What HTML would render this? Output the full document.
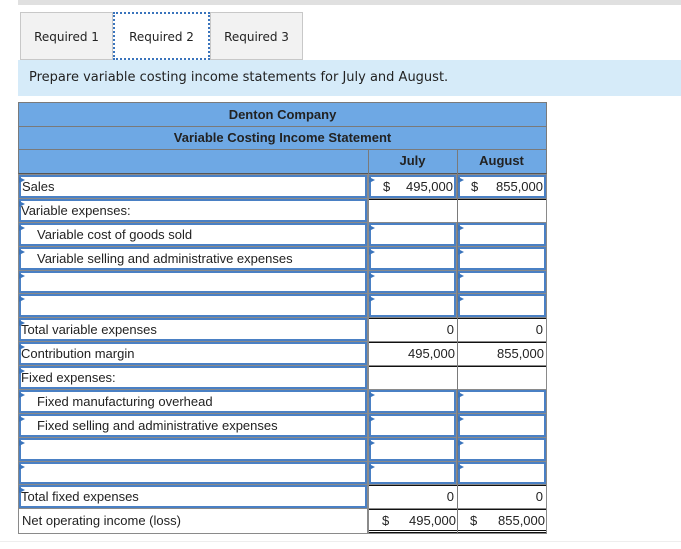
<!DOCTYPE html>
<html><head><meta charset="utf-8"><style>
*{margin:0;padding:0;box-sizing:border-box}
body{width:681px;height:549px;background:#fff;position:relative;overflow:hidden;font-family:"Liberation Sans",Arial,sans-serif;font-size:13px;color:#222}
.a{position:absolute}
.tab{position:absolute;top:12px;height:48px;background:#f2f2f2;border:1px solid #c8c8c8;font-family:"DejaVu Sans",Verdana,sans-serif;font-size:12px;color:#222;text-align:center;line-height:48px}
.hd{position:absolute;left:18px;width:529px;background:#6ea8e4;border:1px solid #7a7a7a;border-bottom:none;font-weight:bold;font-size:13px;text-align:center;color:#222}
.in{position:absolute;border:2px solid #4a80c4;background:#fff}
.in::before{content:"";position:absolute;left:-2px;top:-2px;border-left:6px solid #3a74bc;border-top:3px solid transparent;border-bottom:3px solid transparent;transform:translateY(2px)}
.pl{position:absolute;background:#fff}
.t{position:absolute;white-space:nowrap;line-height:22px}
.vl{position:absolute;width:1px;background:#7a7a7a}
</style></head><body>
<div class="a" style="left:18px;top:0;width:663px;height:5px;background:#e0e0e0"></div>
<div class="tab" style="left:20px;width:93px">Required 1</div>
<div class="tab" style="left:113px;width:97px;background:#fff;border:2px dotted #3a74bc;line-height:46px">Required 2</div>
<div class="tab" style="left:210px;width:93px">Required 3</div>
<div class="a" style="left:18px;top:60px;width:663px;height:36px;background:#d6ebf9;font-family:'DejaVu Sans',Verdana,sans-serif;font-size:13px;line-height:36px;padding-left:11px;color:#222">Prepare variable costing income statements for July and August.</div>

<div class="hd" style="top:102px;height:24px;line-height:24px">Denton Company</div>
<div class="hd" style="top:126px;height:23px;line-height:21px">Variable Costing Income Statement</div>
<div class="hd" style="top:149px;height:25px;line-height:25px;border-bottom:1px solid #555"></div>
<div class="t" style="left:368px;width:89px;top:150px;text-align:center;font-weight:bold;font-size:13px">July</div>
<div class="t" style="left:457px;width:89px;top:150px;text-align:center;font-weight:bold;font-size:13px">August</div>
<div class="vl" style="left:368px;top:149px;height:25px"></div>
<div class="vl" style="left:457px;top:149px;height:25px"></div>

<div class="a" style="left:18px;top:174px;width:529px;height:360px;background:#8a8a8a"></div>

<div class="in" style="left:19px;top:175px;width:348px;height:23px"><span class="t" style="left:1px;top:-1px">Sales</span></div>
<div class="in" style="left:369px;top:175px;width:87px;height:23px"><span class="t" style="left:12px;top:-1px">$</span><span class="t" style="right:1px;top:-1px">495,000</span></div>
<div class="in" style="left:458px;top:175px;width:88px;height:23px"><span class="t" style="left:11px;top:-1px">$</span><span class="t" style="right:1px;top:-1px">855,000</span></div>
<div class="in" style="left:19px;top:199px;width:348px;height:23px"><span class="t" style="left:0;top:-1px">Variable expenses:</span></div>
<div class="pl" style="left:369px;top:199px;width:88px;height:23px;border-top:1px solid #111"></div>
<div class="pl" style="left:458px;top:199px;width:88px;height:23px;border-top:1px solid #111"></div>
<div class="in" style="left:19px;top:223px;width:348px;height:23px"><span class="t" style="left:16px;top:-1px">Variable cost of goods sold</span></div>
<div class="in" style="left:369px;top:223px;width:87px;height:23px"></div>
<div class="in" style="left:458px;top:223px;width:88px;height:23px"></div>
<div class="in" style="left:19px;top:247px;width:348px;height:23px"><span class="t" style="left:16px;top:-1px">Variable selling and administrative expenses</span></div>
<div class="in" style="left:369px;top:247px;width:87px;height:23px"></div>
<div class="in" style="left:458px;top:247px;width:88px;height:23px"></div>
<div class="in" style="left:19px;top:271px;width:348px;height:22px"></div>
<div class="in" style="left:369px;top:271px;width:87px;height:22px"></div>
<div class="in" style="left:458px;top:271px;width:88px;height:22px"></div>
<div class="in" style="left:19px;top:294px;width:348px;height:23px"></div>
<div class="in" style="left:369px;top:294px;width:87px;height:23px"></div>
<div class="in" style="left:458px;top:294px;width:88px;height:23px"></div>
<div class="in" style="left:19px;top:318px;width:348px;height:23px"><span class="t" style="left:0;top:-1px">Total variable expenses</span></div>
<div class="pl" style="left:369px;top:318px;width:88px;height:23px;border-top:1px solid #111"><span class="t" style="right:3px;top:0">0</span></div>
<div class="pl" style="left:458px;top:318px;width:88px;height:23px;border-top:1px solid #111"><span class="t" style="right:3px;top:0">0</span></div>
<div class="in" style="left:19px;top:342px;width:348px;height:23px"><span class="t" style="left:0;top:-1px">Contribution margin</span></div>
<div class="pl" style="left:369px;top:342px;width:88px;height:23px;border-top:1px solid #111"><span class="t" style="right:2px;top:0">495,000</span></div>
<div class="pl" style="left:458px;top:342px;width:88px;height:23px;border-top:1px solid #111"><span class="t" style="right:2px;top:0">855,000</span></div>
<div class="in" style="left:19px;top:366px;width:348px;height:23px"><span class="t" style="left:0;top:-1px">Fixed expenses:</span></div>
<div class="pl" style="left:369px;top:366px;width:88px;height:23px;border-top:1px solid #111"></div>
<div class="pl" style="left:458px;top:366px;width:88px;height:23px;border-top:1px solid #111"></div>
<div class="in" style="left:19px;top:390px;width:348px;height:23px"><span class="t" style="left:16px;top:-1px">Fixed manufacturing overhead</span></div>
<div class="in" style="left:369px;top:390px;width:87px;height:23px"></div>
<div class="in" style="left:458px;top:390px;width:88px;height:23px"></div>
<div class="in" style="left:19px;top:414px;width:348px;height:23px"><span class="t" style="left:16px;top:-1px">Fixed selling and administrative expenses</span></div>
<div class="in" style="left:369px;top:414px;width:87px;height:23px"></div>
<div class="in" style="left:458px;top:414px;width:88px;height:23px"></div>
<div class="in" style="left:19px;top:438px;width:348px;height:23px"></div>
<div class="in" style="left:369px;top:438px;width:87px;height:23px"></div>
<div class="in" style="left:458px;top:438px;width:88px;height:23px"></div>
<div class="in" style="left:19px;top:462px;width:348px;height:22px"></div>
<div class="in" style="left:369px;top:462px;width:87px;height:22px"></div>
<div class="in" style="left:458px;top:462px;width:88px;height:22px"></div>
<div class="in" style="left:19px;top:485px;width:348px;height:23px"><span class="t" style="left:0;top:-1px">Total fixed expenses</span></div>
<div class="pl" style="left:369px;top:485px;width:88px;height:23px;border-top:1px solid #111"><span class="t" style="right:3px;top:0">0</span></div>
<div class="pl" style="left:458px;top:485px;width:88px;height:23px;border-top:1px solid #111"><span class="t" style="right:3px;top:0">0</span></div>
<div class="pl" style="left:19px;top:509px;width:348px;height:24px"><span class="t" style="left:3px;top:1px">Net operating income (loss)</span></div>
<div class="pl" style="left:369px;top:509px;width:88px;height:24px;border-top:1px solid #111;border-bottom:3px double #111"><span class="t" style="left:13px;top:0">$</span><span class="t" style="right:1px;top:0">495,000</span></div>
<div class="pl" style="left:458px;top:509px;width:88px;height:24px;border-top:1px solid #111;border-bottom:3px double #111"><span class="t" style="left:12px;top:0">$</span><span class="t" style="right:1px;top:0">855,000</span></div>
<div class="vl" style="left:457px;top:174px;height:360px"></div>
<div class="a" style="left:0;top:541px;width:681px;height:1px;background:#eee"></div>
</body></html>
